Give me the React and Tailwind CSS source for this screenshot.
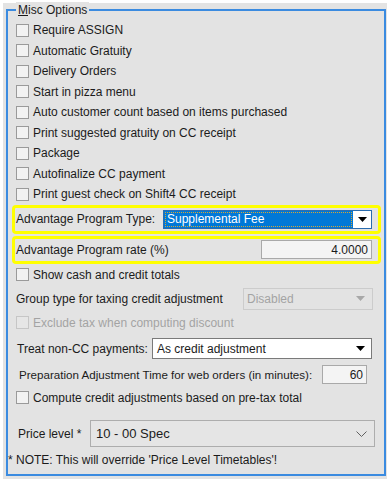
import React from 'react';

const font = { fontFamily: '"Liberation Sans", Arial, sans-serif' };

function Box({ disabled }) {
  return (
    <span
      className={`w-[13px] h-[13px] shrink-0 border ${disabled ? 'border-[#c6c6c6] bg-[#e6e6e6]' : 'border-[#9a9a9a] bg-[#f2f2f2]'}`}
    />
  );
}

function Check({ label, disabled, h = 'h-[20.5px]' }) {
  return (
    <div className={`flex items-center gap-[4px] pl-[8px] whitespace-nowrap ${h}`}>
      <Box disabled={disabled} />
      <span className={disabled ? 'text-[#a3a3a3]' : ''}>{label}</span>
    </div>
  );
}

function Triangle({ color = '#000' }) {
  return (
    <svg width="9" height="5" viewBox="0 0 9 5">
      <path d="M0 0H9L4.5 5Z" fill={color} />
    </svg>
  );
}

const checks = [
  'Require ASSIGN',
  'Automatic Gratuity',
  'Delivery Orders',
  'Start in pizza menu',
  'Auto customer count based on items purchased',
  'Print suggested gratuity on CC receipt',
  'Package',
  'Autofinalize CC payment',
  'Print guest check on Shift4 CC receipt',
];

export default function App() {
  return (
    <div className="w-[391px] h-[481px] bg-white pt-[3px] pl-[3px] text-[12px] text-[#1b1b1b]" style={font}>
      <div className="w-[384px] h-[476px] bg-[#e3e3e3] pt-[6px] pl-[3px]">
        <div className="relative w-[380px] h-[467px] border-2 border-[#3b8be0]">
          <div className="absolute -top-[9px] left-[8px] bg-[#e3e3e3] px-[2px] leading-[16px]">
            <span className="underline">M</span>isc Options
          </div>

          <div className="flex flex-col pt-[9px] whitespace-nowrap">
            {checks.map((c) => (
              <Check key={c} label={c} />
            ))}

            <div className="ml-[4px] w-[369px] h-[29px] border-[3px] border-[#ffff00] rounded-[4px] flex items-center pl-[1px] pr-[6px]">
              <span>Advantage Program Type:</span>
              <div className="ml-auto w-[209px] h-[19px] border border-[#2a6db0] bg-white flex">
                <div className="flex-1 bg-[#0078d7] p-[1px]">
                  <div className="h-full border border-dotted border-[#d9a531] text-white flex items-center pl-[1px]">
                    Supplemental Fee
                  </div>
                </div>
                <div className="w-[18px] flex items-center justify-center">
                  <Triangle />
                </div>
              </div>
            </div>

            <div className="mt-[2px] ml-[4px] w-[369px] h-[28px] border-[3px] border-[#ffff00] rounded-[4px] flex items-center pl-[1px] pr-[6px]">
              <span>Advantage Program rate (%)</span>
              <div className="ml-auto w-[111px] h-[19px] border border-[#a9a9a9] bg-[#f4f4f4] flex items-center justify-end pr-[3px]">
                4.0000
              </div>
            </div>

            <Check label="Show cash and credit totals" h="h-[22px]" />

            <div className="h-[26px] flex items-center pl-[8px] pr-[11px]">
              <span>Group type for taxing credit adjustment</span>
              <div className="ml-auto w-[130px] h-[22px] border border-[#cccccc] flex items-center pl-[3px] pr-[7px] text-[#a3a3a3]">
                <span>Disabled</span>
                <span className="ml-auto flex">
                  <Triangle color="#a8a8a8" />
                </span>
              </div>
            </div>

            <Check label="Exclude tax when computing discount" disabled h="h-[22px]" />

            <div className="h-[30px] flex items-center pl-[9px] pr-[12px]">
              <span>Treat non-CC payments:</span>
              <div className="ml-auto w-[220px] h-[21px] border border-[#7a7a7a] bg-white flex items-center pl-[4px] pr-[6px]">
                <span>As credit adjustment</span>
                <span className="ml-auto flex">
                  <Triangle />
                </span>
              </div>
            </div>

            <div className="h-[22px] flex items-center pl-[11px] pr-[17px]">
              <span className="text-[11.6px]">Preparation Adjustment Time for web orders (in minutes):</span>
              <div className="ml-auto shrink-0 w-[45px] h-[19px] border border-[#a9a9a9] bg-[#f4f4f4] flex items-center justify-end pr-[3px]">
                60
              </div>
            </div>

            <Check label="Compute credit adjustments based on pre-tax total" h="h-[24px]" />

            <div className="mt-[8px] h-[32px] flex items-center pl-[10px] pr-[9px]">
              <span>Price level *</span>
              <div className="ml-auto w-[285px] h-[27px] border border-[#adadad] bg-[#e5e5e5] flex items-center pl-[5px] pr-[7px] text-[13px]">
                <span>10 - 00 Spec</span>
                <svg className="ml-auto" width="11" height="6" viewBox="0 0 11 6">
                  <path d="M0.5 0.5L5.5 5.5L10.5 0.5" fill="none" stroke="#606060" strokeWidth="1" />
                </svg>
              </div>
            </div>

            <div className="h-[20px] flex items-center pl-[0px]">
              * NOTE: This will override 'Price Level Timetables'!
            </div>
          </div>
        </div>
      </div>
    </div>
  );
}
